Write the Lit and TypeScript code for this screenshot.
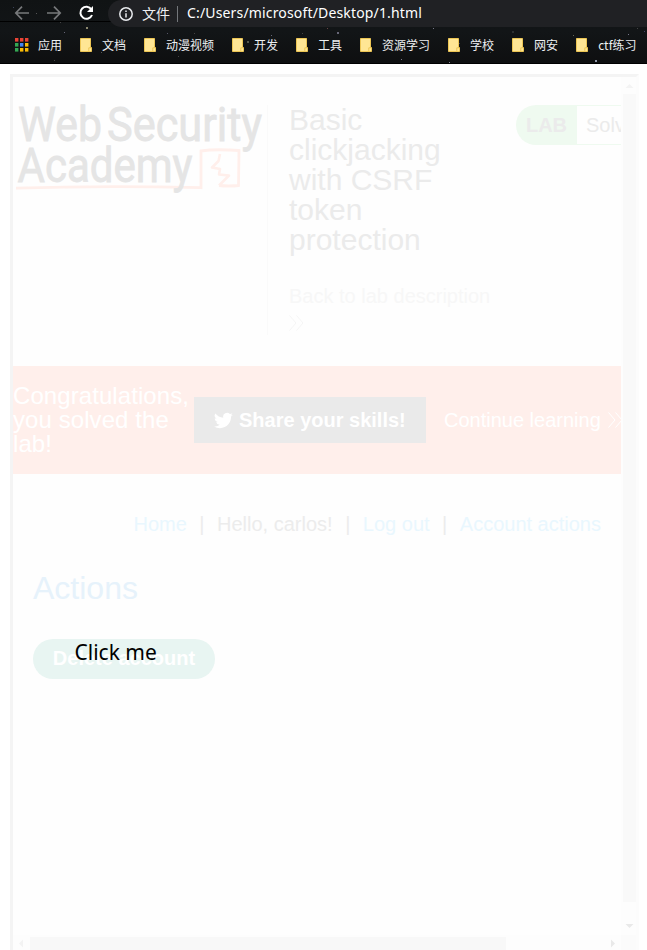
import { LitElement, html, css, svg } from "lit";
import { customElement } from "lit/decorators.js";

const BOOKMARKS = ["文档", "动漫视频", "开发", "工具", "资源学习", "学校", "网安", "ctf练习"];
const APP_COLORS = ["#ea4335", "#ea4335", "#ea4335", "#34a853", "#4285f4", "#fbbc05", "#34a853", "#fbbc05", "#fbbc05"];
const STARS: [number, number, number, string][] = [
  [13, 7, 1, "#3a4258"], [36, 13, 1, "#555"], [60, 22, 1, "#444"], [64, 32, 1, "#667"], [86, 27, 2, "#8c8870"],
  [89, 4, 1, "#3d4634"], [42, 49, 1, "#444"], [54, 60, 1, "#444"], [101, 52, 1, "#555"], [167, 33, 1, "#556"],
  [194, 33, 1, "#444"], [178, 56, 1, "#444"], [247, 41, 2, "#55564c"], [271, 35, 1, "#667"], [302, 33, 1, "#444"],
  [337, 32, 2, "#667"], [327, 28, 1, "#644"], [401, 59, 1, "#778"], [433, 28, 1, "#778"], [449, 62, 1, "#889"],
  [459, 43, 1, "#445"], [490, 52, 1, "#443"], [512, 31, 2, "#2c2f31"], [573, 35, 1, "#665"], [595, 60, 2, "#9097a8"],
  [628, 34, 1, "#778"], [644, 31, 1, "#446"], [637, 28, 1, "#444"],
];

@customElement("browser-chrome")
export class BrowserChrome extends LitElement {
  static styles = css`
    :host { display: block; position: relative; height: 64px; background: linear-gradient(#101314, #121517 50%, #0e0f10);
      border-bottom: 1px solid #000; box-sizing: border-box; color: #eef0f2;
      font-family: "Noto Sans", "Noto Sans CJK SC", sans-serif; overflow: hidden; }
    .stars { position: absolute; inset: 0; width: 647px; height: 64px; }
    .bar, .marks { position: relative; display: flex; }
    .bar { height: 27px; }
    .nav { width: 108px; flex: none; height: 27px; }
    .address { flex: 1; height: 27px; background: #202124; border-radius: 14px 0 0 14px;
      display: flex; align-items: center; padding-left: 11px; font-size: 14px; white-space: nowrap; }
    .info { width: 14px; height: 14px; margin-right: 9px; }
    .scheme { width: 28px; font-family: "Noto Sans CJK SC", sans-serif; line-height: 24px; height: 26px; }
    .rule { width: 1px; height: 16px; background: #74777b; margin: 0 9px 0 7px; }
    .url { font-size: 14px; line-height: 24px; height: 26px; letter-spacing: .16px; color: #fff; }
    .marks { height: 36px; align-items: center; padding-left: 15px; gap: 18px; font-size: 12px; white-space: nowrap; }
    .mark { display: flex; align-items: center; line-height: 18px; font-family: "Noto Sans CJK SC", sans-serif; }
    .apps { width: 14px; height: 14px; margin-right: 9px; }
    .folder { width: 12px; height: 14px; margin-right: 10px; }
  `;
  render() {
    return html`
      <svg class="stars" viewBox="0 0 647 64">
        <rect y="21" width="116" height="1" fill="#000" />
        ${STARS.map(([x, y, s, c]) => svg`<rect x=${x} y=${y} width=${s} height=${s} fill=${c} />`)}
      </svg>
      <div class="bar">
        <svg class="nav" viewBox="0 0 108 27" fill="none" stroke-width="1.7">
          <path d="M29 13H16M22 6.6L15.8 13L22 19.4M47 13h13M54 6.6L60.2 13L54 19.4" stroke="#77797b" />
          <path d="M91.4 9.4A6 6 0 1 0 92 15" stroke="#fff" stroke-width="2" />
          <path d="M93 6v6h-6z" fill="#fff" />
        </svg>
        <div class="address">
          <svg class="info" viewBox="0 0 14 14" fill="none" stroke="#e8eaed" stroke-width="1.5">
            <circle cx="7" cy="7" r="6.2" /><path d="M7 6.2v4.3M7 3.4v1.5" />
          </svg>
          <span class="scheme">文件</span><span class="rule"></span>
          <span class="url">C:/Users/microsoft/Desktop/1.html</span>
        </div>
      </div>
      <div class="marks">
        <div class="mark">
          <svg class="apps" viewBox="0 0 14 14">
            ${APP_COLORS.map((c, i) => svg`<rect x=${(i % 3) * 5} y=${Math.floor(i / 3) * 5} width="3.4" height="3.6" fill=${c} />`)}
          </svg>应用
        </div>
        ${BOOKMARKS.map((b) => html`<div class="mark">
          <svg class="folder" viewBox="0 0 12 14">
            <path d="M.5.5h10v9h1v4H.5z" fill="#ffe694" stroke="#edc654" />
            <path d="M8.8 13V9.8h2" fill="none" stroke="#edc654" />
          </svg>${b}</div>`)}
      </div>`;
  }
}

@customElement("lab-page")
export class LabPage extends LitElement {
  static styles = css`
    :host { display: block; width: 608px; height: 858px; overflow: hidden; background: #fefefe;
      font-family: "Liberation Sans", Arial, sans-serif; font-size: 20px; }
    .head { display: flex; height: 289px; box-sizing: border-box; padding-top: 28px; white-space: nowrap; }
    .logo { width: 254px; height: 90px; flex: none; overflow: visible; }
    .divider { width: 1px; height: 230px; background: #fafafa; flex: none; }
    .title { width: 227px; flex: none; padding-left: 21px; box-sizing: border-box; color: #ebebeb; }
    .title h2 { margin: 0; font-weight: 400; font-size: 30px; line-height: 30px; }
    .back { margin-top: 28px; line-height: 26px; color: #f7f7f7; }
    .chev { display: block; width: 15px; height: 16px; fill: none; stroke: #f5f5f5; stroke-width: 1; }
    .back .chev { margin-top: 6px; }
    .lab { display: flex; flex: none; margin-left: 21px; height: 40px; line-height: 40px; color: #ebebeb; }
    .tag { width: 61px; text-align: center; font-weight: 700; background: #effaf0; border-radius: 20px 0 0 20px; }
    .state { width: 120px; height: 40px; box-sizing: border-box; padding-left: 9px; line-height: 38px;
      border: 1px solid #effaf0; border-left: 0; }
    .solved { display: flex; align-items: center; height: 108px; background: #ffefeb; color: #fff; white-space: nowrap; }
    .congrats { width: 181px; flex: none; font-size: 24px; line-height: 24px; letter-spacing: .08px; }
    .share { display: flex; align-items: center; flex: none; width: 232px; height: 46px; box-sizing: border-box;
      padding-left: 20px; background: #eaeaea; font-weight: 700; }
    .bird { width: 19px; height: 19px; margin-right: 6px; fill: #fff; }
    .next { display: flex; align-items: center; margin-left: 18px; flex: none; }
    .next .chev { stroke: #fff; margin-left: 7px; }
    .links { display: flex; justify-content: flex-end; margin: 38px 20px 0 0; line-height: 24px; color: #ececec; white-space: pre; }
    .links .link { color: #e9f7fe; }
    .links .bar { margin: 0 12.5px; }
    .body { padding: 34px 20px 0; }
    .body h1 { margin: 0; font-size: 32px; line-height: 36px; font-weight: 400; color: #e6f2fb; }
    .delete { display: flex; align-items: center; justify-content: center; margin-top: 33px; width: 182px; height: 40px;
      padding-bottom: 2px; box-sizing: border-box; border-radius: 20px; background: #e8f5f2; color: #fff; font-weight: 700; }
  `;
  chevrons() {
    return html`<svg class="chev" viewBox="0 0 15 16"><path d="M.5 .5L7 8L.5 15.5M7.5 .5L14 8L7.5 15.5" /></svg>`;
  }
  render() {
    return html`
      <div class="head">
        <svg class="logo" viewBox="0 0 254 90" fill="#e5e5e5" font-family="Roboto" font-weight="400" font-size="48">
          <path d="M3 83.2Q90 80.3 188 82.7V46Q202 43.8 226 45.5L225.5 80.5Q216 81.5 206 80.5" fill="none" stroke="#ffefeb" stroke-width="2.8" />
          <path d="M207 49L205.5 56L199 62.5L207 64L206 69.5L216 70.5L206 80.5" fill="none" stroke="#ffefeb" stroke-width="2.6" stroke-linejoin="round" />
          <g stroke="#e5e5e5" stroke-width=".8">
            <text x="5" y="35.5" textLength="84" lengthAdjust="spacingAndGlyphs">Web</text>
            <text x="94" y="35.5" textLength="155" lengthAdjust="spacingAndGlyphs">Security</text>
            <text x="4.5" y="76.5" textLength="175" lengthAdjust="spacingAndGlyphs">Academy</text>
          </g>
        </svg>
        <div class="divider"></div>
        <div class="title">
          <h2>Basic<br />clickjacking<br />with CSRF<br />token<br />protection</h2>
          <div class="back">Back to lab description${this.chevrons()}</div>
        </div>
        <div class="lab"><span class="tag">LAB</span><span class="state">Solved</span></div>
      </div>
      <div class="solved">
        <div class="congrats">Congratulations,<br />you solved the<br />lab!</div>
        <div class="share">
          <svg class="bird" viewBox="0 0 24 24"><path d="M23.9 4.6a10 10 0 0 1-2.8.8 4.9 4.9 0 0 0 2.1-2.7c-1 .6-2 1-3.1 1.2a4.9 4.9 0 0 0-8.4 4.5C7.7 8.1 4 6.1 1.7 3.1a4.8 4.8 0 0 0 1.5 6.6 5 5 0 0 1-2.2-.6v.1a4.9 4.9 0 0 0 3.9 4.8 5 5 0 0 1-2.2.1 4.9 4.9 0 0 0 4.6 3.4A9.9 9.9 0 0 1 0 19.5a14 14 0 0 0 7.5 2.2c9.1 0 14-7.5 14-14v-.6a10 10 0 0 0 2.4-2.5z" /></svg>
          Share your skills!
        </div>
        <div class="next">Continue learning${this.chevrons()}</div>
      </div>
      <div class="links"><span class="link">Home</span><span class="bar">|</span><span>Hello, carlos!</span><span class="bar">|</span><span class="link">Log out</span><span class="bar">|</span><span class="link">Account actions</span></div>
      <div class="body"><h1>Actions</h1><div class="delete">Delete account</div></div>`;
  }
}

@customElement("app-root")
export class AppRoot extends LitElement {
  static styles = css`
    :host { display: block; position: relative; width: 647px; height: 950px; overflow: hidden; background: #fff; }
    .frame { display: grid; grid-template: 858px 15px / 608px 15px; width: 623px; margin: 10px 0 0 10px;
      border: 3px solid #f4f4f4; border-right-color: #fcfcfc; border-bottom: 0; }
    .vertical, .horizontal { background: #fdfdfd; display: flex; align-items: center; }
    .vertical { flex-direction: column; padding-left: 2px; }
    .vertical .thumb { width: 13px; height: 808px; background: #f9f9f9; }
    .horizontal .thumb { width: 476px; height: 13px; margin-top: 2px; background: #f8f8f8; }
    .corner { background: #fbfbfb; }
    .arrow { display: block; flex: none; fill: #f3f3f3; }
    .arrow.dark { fill: #e9e9e9; }
    .vertical .arrow { width: 13px; height: 17px; }
    .vertical .arrow.dark { margin-top: 15px; }
    .horizontal .arrow { width: 17px; height: 15px; }
    .horizontal .arrow.dark { margin-left: 98px; }
    .decoy { position: absolute; left: 74.5px; top: 637px; font: 21px/30px "Noto Sans", sans-serif; color: #000; white-space: nowrap; }
  `;
  render() {
    return html`
      <browser-chrome></browser-chrome>
      <div class="frame">
        <lab-page></lab-page>
        <div class="vertical">
          <svg class="arrow" viewBox="0 0 13 17"><path d="M2.5 11L6.5 7L10.5 11z" /></svg>
          <div class="thumb"></div>
          <svg class="arrow dark" viewBox="0 0 13 17"><path d="M2.5 7L6.5 11L10.5 7z" /></svg>
        </div>
        <div class="horizontal">
          <svg class="arrow" viewBox="0 0 17 15"><path d="M10 4.5L6 8.5L10 12.5z" /></svg>
          <div class="thumb"></div>
          <svg class="arrow dark" viewBox="0 0 17 15"><path d="M7 4.5L11 8.5L7 12.5z" /></svg>
        </div>
        <div class="corner"></div>
      </div>
      <div class="decoy">Click me</div>`;
  }
}
